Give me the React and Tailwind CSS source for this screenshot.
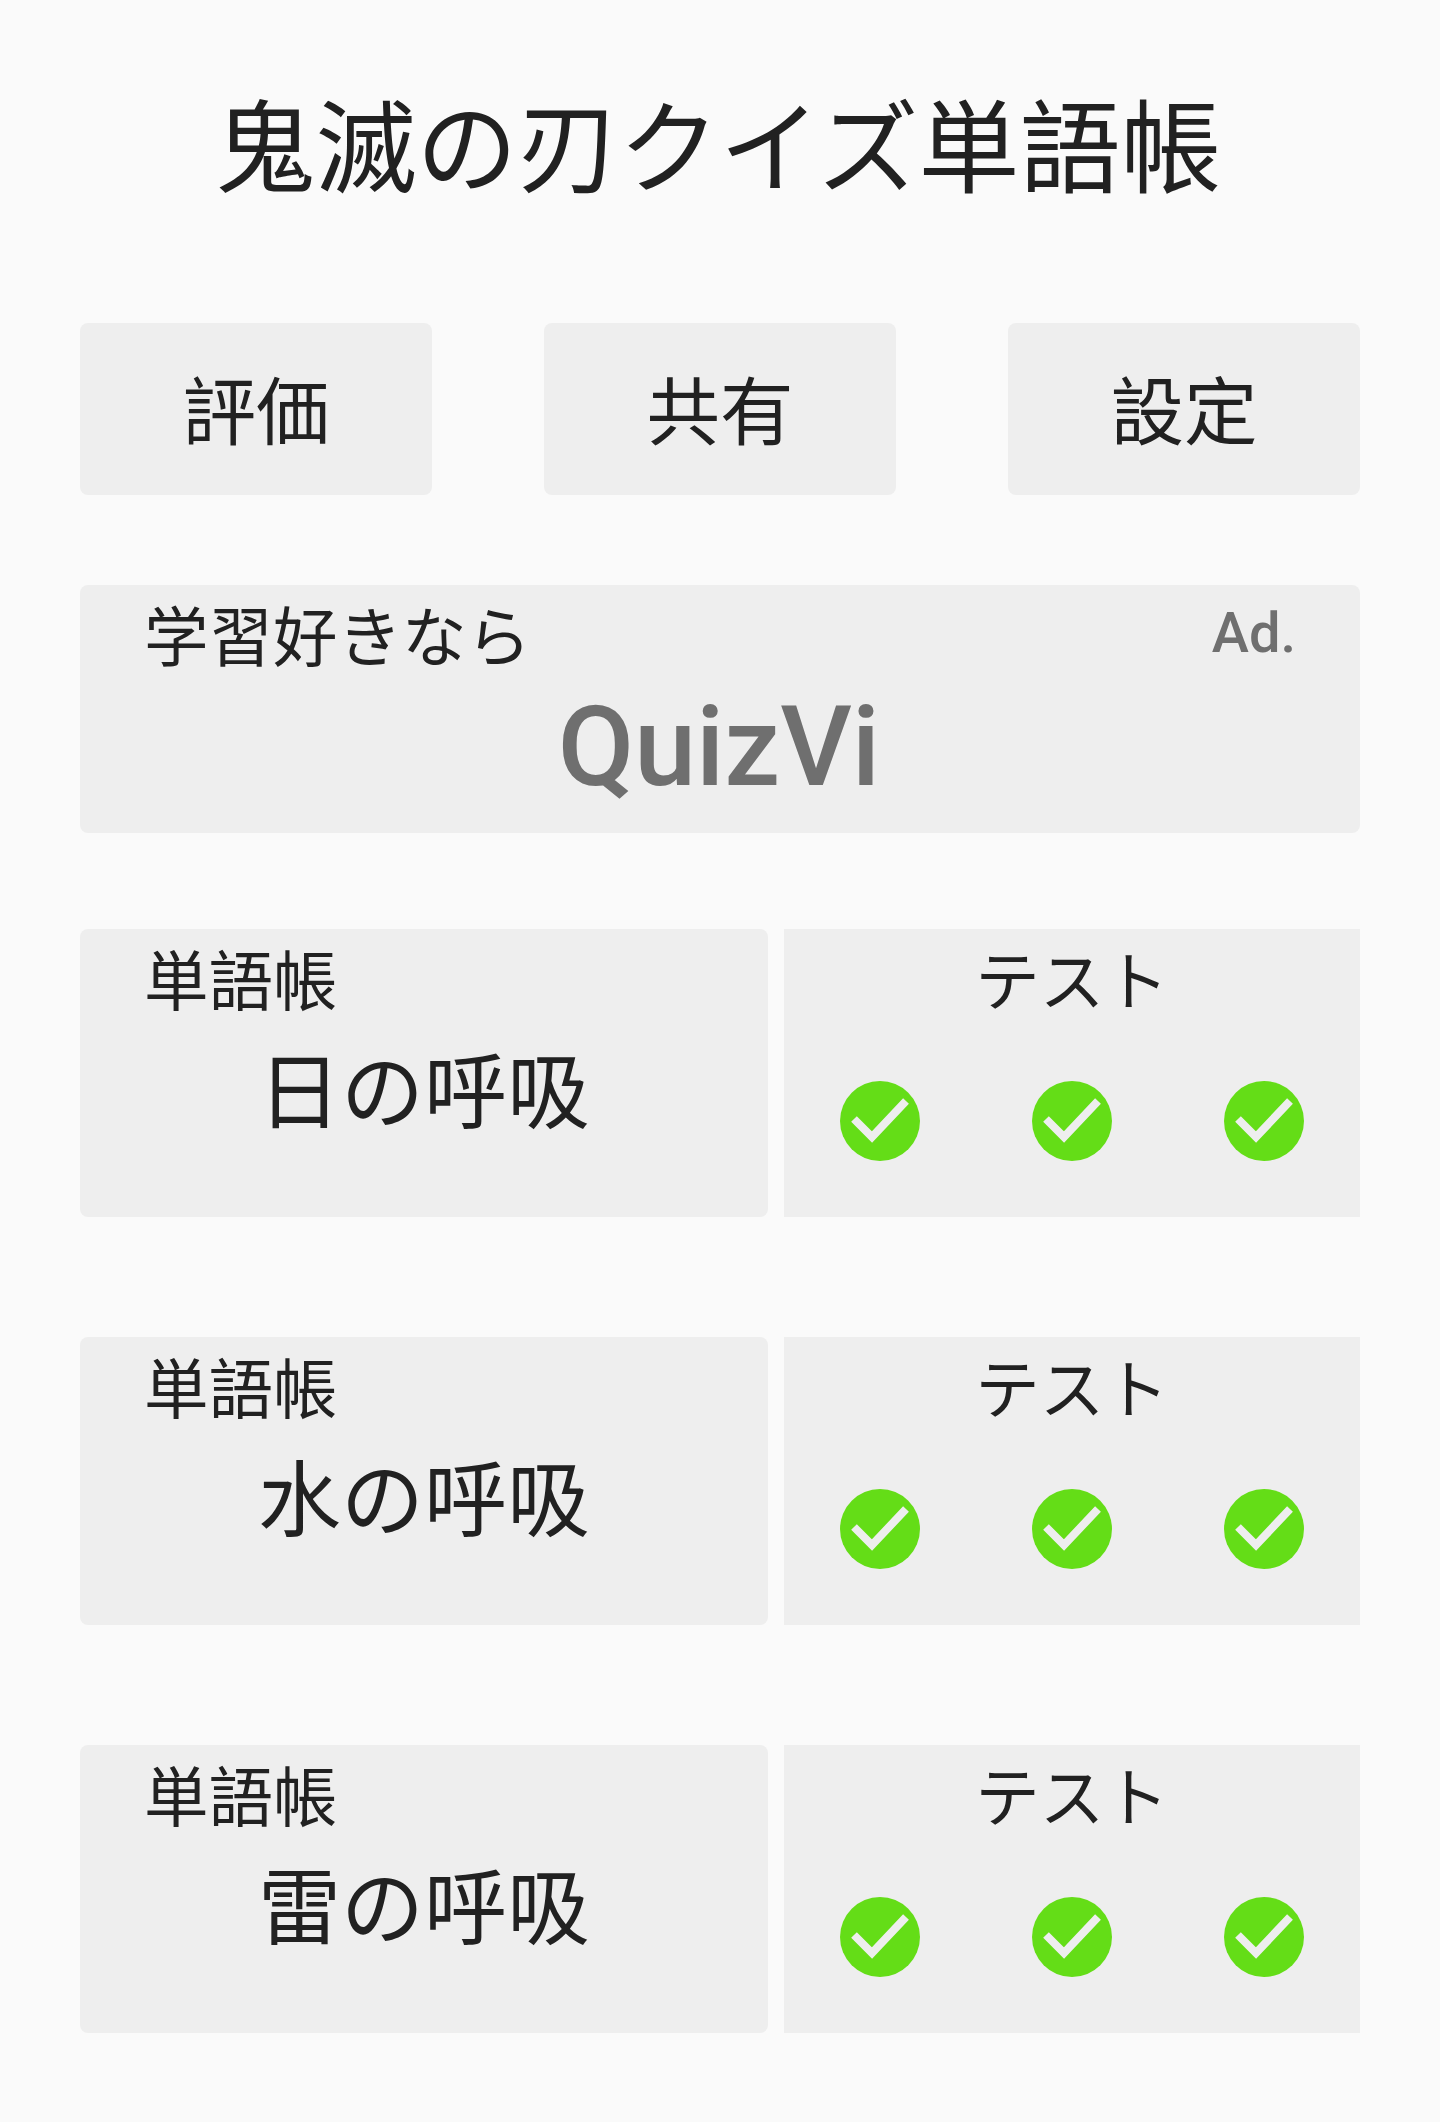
import React from "react";

const cjk = "font-['Noto_Sans_CJK_SC',sans-serif]";

function Check() {
  return (
    <svg viewBox="0 0 80 80" className="h-20 w-20">
      <circle cx="40" cy="40" r="40" fill="#64dd17" />
      <path d="M14 38 L32 56 L66 20" fill="none" stroke="#eeeeee" strokeWidth="8" />
    </svg>
  );
}

function Row({ name }) {
  return (
    <div className="flex gap-4">
      <div className="h-[288px] w-[688px] rounded-lg bg-[#eeeeee] pt-2 text-[#212121]">
        <div className="pl-16 text-[64.5px] leading-[80px]">単語帳</div>
        <div className="mt-[19px] text-center text-[83px] leading-[100px]">{name}</div>
      </div>
      <div className="h-[288px] w-[576px] bg-[#eeeeee] pt-2 text-[#212121]">
        <div className="text-center text-[64.5px] leading-[80px]">テスト</div>
        <div className="mt-[64px] grid grid-cols-3 justify-items-center">
          <Check />
          <Check />
          <Check />
        </div>
      </div>
    </div>
  );
}

function Btn({ label }) {
  return (
    <button className="flex h-[172px] w-[352px] items-center justify-center rounded-lg bg-[#eeeeee] pb-1 text-[73.5px] text-[#212121]">
      {label}
    </button>
  );
}

export default function App() {
  return (
    <div className={`${cjk} h-[2122px] w-[1440px] bg-[#fafafa] px-20`}>
      <h1 className="pt-[81px] pr-[4px] pb-[5px] text-center text-[101px] leading-[120px] font-normal text-[#212121]">
        鬼滅の刃クイズ単語帳
      </h1>
      <div className="mt-[117px] flex justify-between">
        <Btn label="評価" />
        <Btn label="共有" />
        <Btn label="設定" />
      </div>
      <div className="mt-[90px] h-[248px] rounded-lg bg-[#eeeeee] px-16 pt-2">
        <div className="flex items-center justify-between">
          <span className="text-[64.5px] leading-[80px] text-[#212121]">学習好きなら</span>
          <span className="font-['Roboto',sans-serif] text-[56px] leading-[80px] font-medium text-[#6f6f6f]">Ad.</span>
        </div>
        <div className="mt-[14px] pr-[2px] text-center font-['Roboto',sans-serif] text-[111px] leading-[120px] font-medium text-[#6f6f6f]">
          QuizVi
        </div>
      </div>
      <div className="mt-[96px] flex flex-col gap-[120px]">
        <Row name="日の呼吸" />
        <Row name="水の呼吸" />
        <Row name="雷の呼吸" />
      </div>
    </div>
  );
}
